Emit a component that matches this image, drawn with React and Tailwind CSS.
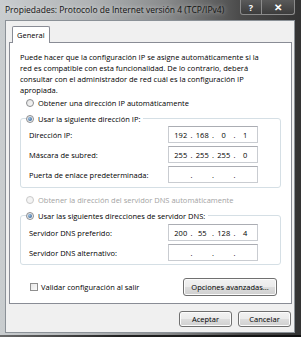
import React from 'react';

const Radio = ({ checked, disabled }) => (
    <span
        className={`w-[8px] h-[8px] rounded-full border flex items-center justify-center shrink-0 ${disabled
            ? 'border-[#c9c9c9] bg-[#f4f4f4]'
            : 'border-[#8a8c8f] bg-[linear-gradient(135deg,#e4e4e4,#f8f8f8)]'
            }`}
    >
        {checked && <span className="w-[4px] h-[4px] rounded-full bg-[radial-gradient(circle_at_35%_35%,#9fc4e8,#1f4f82)]" />}
    </span>
);

const RadioRow = ({ checked, disabled, label, className = '' }) => (
    <div className={`h-[11px] flex items-center leading-[10px] whitespace-nowrap ${disabled ? 'text-[#a3a3a3]' : ''} ${className}`}>
        <Radio checked={checked} disabled={disabled} />
        <span className="ml-[4px]">{label}</span>
    </div>
);

const IpBox = ({ parts }) => (
    <div className="w-[90px] h-[17px] border border-[#c9ccd1] border-t-[#abadb3] bg-white flex items-center px-[1px] leading-[10px]">
        {parts.map((p, i) => (
            <React.Fragment key={i}>
                <span className="w-[22px] text-center">{p}</span>
                {i < 3 && <span className="w-0 flex justify-center">.</span>}
            </React.Fragment>
        ))}
    </div>
);

const Row = ({ label, parts }) => (
    <div className="flex items-center h-[17px] pl-[8px]">
        <span className="w-[139px] whitespace-nowrap leading-[10px]">{label}</span>
        <IpBox parts={parts} />
    </div>
);

const Button = ({ children, className }) => (
    <button
        className={`border border-[#707070] rounded-[3px] bg-[linear-gradient(#f2f2f2_0%,#ebebeb_50%,#dddddd_51%,#cfcfcf_100%)] shadow-[inset_0_0_0_1px_#fcfcfc] flex items-center justify-center leading-[10px] text-black ${className}`}
    >
        {children}
    </button>
);

export default function App() {
    return (
        <div
            className="w-[301px] h-[337px] overflow-hidden flex flex-col text-[7.5px] leading-[10px] text-black bg-[linear-gradient(90deg,#c9cdcf_0%,#b0b3b5_30%,#8a8c8d_55%,#4a4a4a_80%,#333333_100%)]"
            style={{ fontFamily: '"Open Sans", "Noto Sans", sans-serif' }}
        >
            {/* Title bar */}
            <div className="h-[20px] flex justify-between shrink-0">
                <span className="pl-[5px] pt-[4px] text-[8.5px] leading-[12px] whitespace-nowrap text-[#111] [text-shadow:0_0_5px_rgba(255,255,255,0.75)]">
                    Propiedades: Protocolo de Internet versión 4 (TCP/IPv4)
                </span>
                <div className="flex pr-[6px] h-[15px]">
                    <div className="w-[22px] h-[15px] border border-[#8b8b8b] border-t-0 rounded-bl-[3px] bg-[linear-gradient(#5a5a5a,#3c3c3c)] flex items-center justify-center text-white text-[9px] font-bold leading-none">
                        ?
                    </div>
                    <div className="w-[33px] h-[15px] border border-[#8b8b8b] border-t-0 border-l-0 rounded-br-[3px] bg-[linear-gradient(#5a5a5a,#3c3c3c)] flex items-center justify-center text-white text-[10px] font-bold leading-none">
                        ✕
                    </div>
                </div>
            </div>

            {/* Client area */}
            <div className="ml-[5px] mr-[6px] h-[313px] border border-[#8b9197] bg-[#f0f0f0] flex flex-col">
                <div className="pt-[5px] pl-[3px] pr-[2px] flex flex-col">
                    <div className="ml-[3px] self-start h-[17px] px-[4px] border-t border-x border-[#898c95] rounded-t-[2px] bg-white relative z-10 -mb-px flex items-center">
                        General
                    </div>
                    <div className="h-[262px] border border-[#898c95] bg-white flex flex-col">
                        <p className="pl-[10px] pt-[9px] leading-[11px] whitespace-nowrap">
                            Puede hacer que la configuración IP se asigne automáticamente si la<br />
                            red es compatible con esta funcionalidad. De lo contrario, deberá<br />
                            consultar con el administrador de red cuál es la configuración IP<br />
                            apropiada.
                        </p>

                        <RadioRow label="Obtener una dirección IP automáticamente" className="mt-[1px] ml-[16px]" />

                        <div className="mt-[10px] ml-[10px] w-[261px] border border-[#d5dfe5] rounded-[3px] pb-[4px] flex flex-col">
                            <div className="-mt-[6px] ml-[5px] w-fit bg-white pr-[3px]">
                                <RadioRow checked label="Usar la siguiente dirección IP:" />
                            </div>
                            <div className="mt-[2px] flex flex-col gap-[3px]">
                                <Row label="Dirección IP:" parts={['192', '168', '0', '1']} />
                                <Row label="Máscara de subred:" parts={['255', '255', '255', '0']} />
                                <Row label="Puerta de enlace predeterminada:" parts={['', '', '', '']} />
                            </div>
                        </div>

                        <RadioRow disabled label="Obtener la dirección del servidor DNS automáticamente" className="mt-[6px] ml-[16px]" />

                        <div className="mt-[10px] ml-[10px] w-[261px] border border-[#d5dfe5] rounded-[3px] pb-[3px] flex flex-col">
                            <div className="-mt-[6px] ml-[5px] w-fit bg-white pr-[3px]">
                                <RadioRow checked label="Usar las siguientes direcciones de servidor DNS:" />
                            </div>
                            <div className="mt-[3px] flex flex-col gap-[3px]">
                                <Row label="Servidor DNS preferido:" parts={['200', '55', '128', '4']} />
                                <Row label="Servidor DNS alternativo:" parts={['', '', '', '']} />
                            </div>
                        </div>

                        <div className="mt-[13px] flex items-center pl-[20px] pr-[14px]">
                            <span className="w-[8px] h-[8px] border border-[#8f8f8f] bg-[linear-gradient(135deg,#e6e6e6,#fbfbfb)] shrink-0" />
                            <span className="ml-[3px] whitespace-nowrap">Validar configuración al salir</span>
                            <Button className="ml-auto w-[94px] h-[18px]">Opciones avanzadas...</Button>
                        </div>
                    </div>
                </div>

                <div className="mt-[7px] flex justify-end gap-[6px] pr-[3px]">
                    <Button className="w-[53px] h-[16px]">Aceptar</Button>
                    <Button className="w-[53px] h-[16px]">Cancelar</Button>
                </div>
            </div>

            <div className="mt-[2px] h-[2px] bg-[linear-gradient(90deg,#6a6a6a,#202020_40%,#111111)]" />
        </div>
    );
}
